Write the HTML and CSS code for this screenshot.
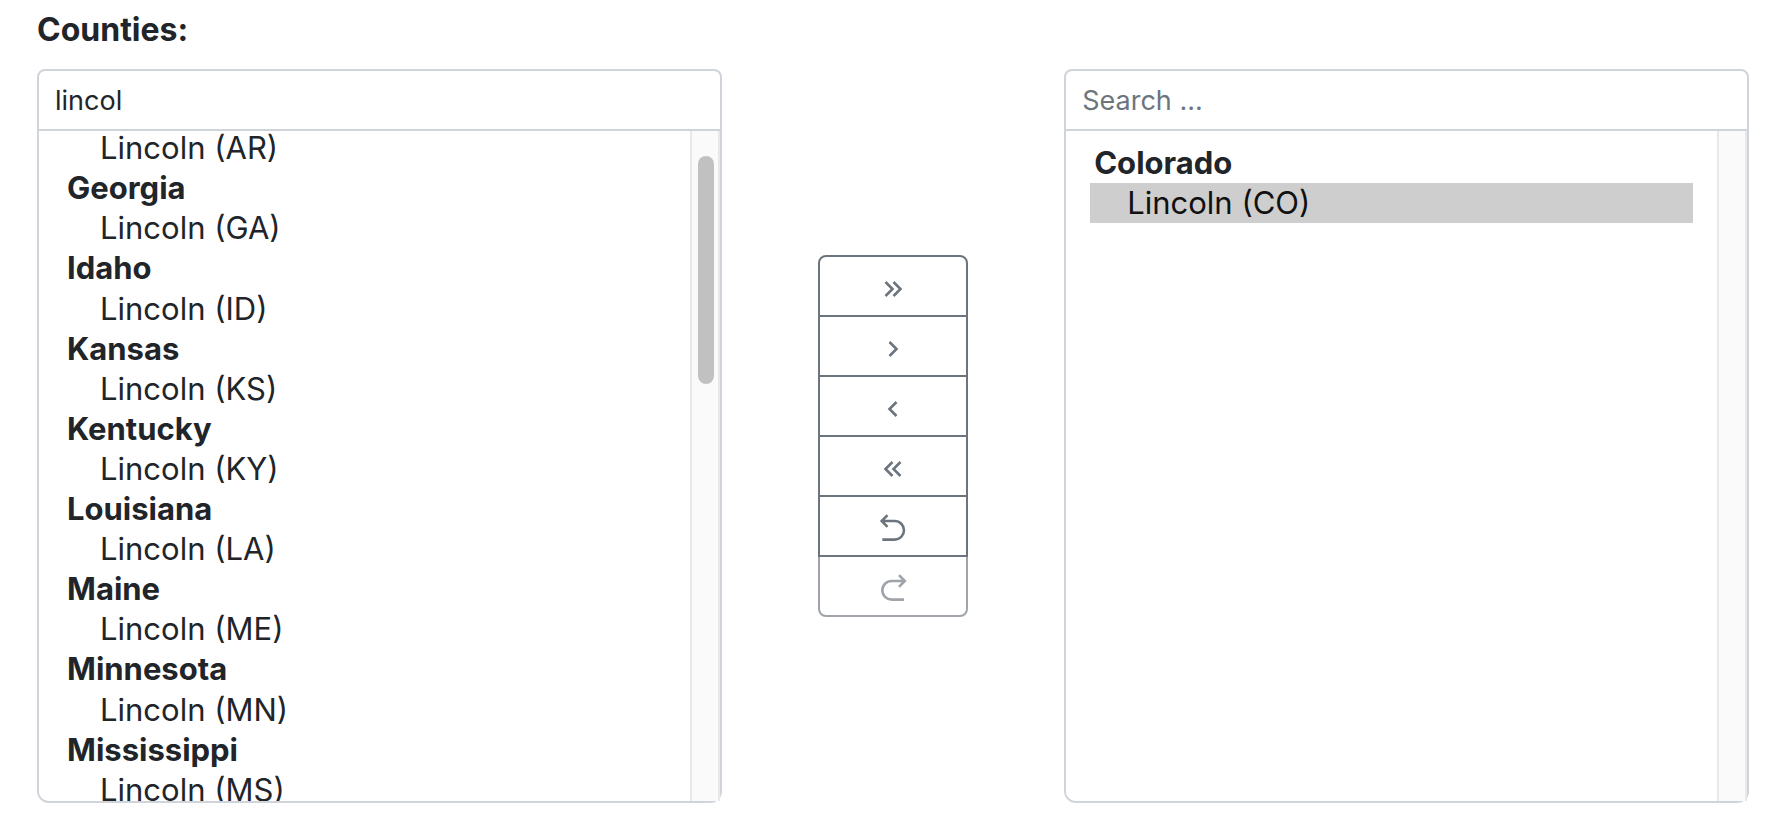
FILE: index.html
```html
<!DOCTYPE html>
<html lang="en">
<head>
<meta charset="utf-8">
<title>Counties</title>
<link rel="stylesheet" href="styles.css">
</head>
<body>
<main class="page">
  <label class="title" for="available">Counties:</label>
  <div class="transfer">
    <section class="panel">
      <input class="search" type="text" value="lincol" placeholder="Search ..." aria-label="Search available counties">
      <div class="list">
        <select class="options" id="available" multiple>
          <optgroup label="Arkansas"><option>Lincoln (AR)</option></optgroup>
          <optgroup label="Georgia"><option>Lincoln (GA)</option></optgroup>
          <optgroup label="Idaho"><option>Lincoln (ID)</option></optgroup>
          <optgroup label="Kansas"><option>Lincoln (KS)</option></optgroup>
          <optgroup label="Kentucky"><option>Lincoln (KY)</option></optgroup>
          <optgroup label="Louisiana"><option>Lincoln (LA)</option></optgroup>
          <optgroup label="Maine"><option>Lincoln (ME)</option></optgroup>
          <optgroup label="Minnesota"><option>Lincoln (MN)</option></optgroup>
          <optgroup label="Mississippi"><option>Lincoln (MS)</option></optgroup>
        </select>
        <div class="track"><div class="thumb"></div></div>
      </div>
    </section>
    <div class="actions">
      <button class="action" type="button" aria-label="Move all right"><svg class="icon" viewBox="0 0 32 32"><path d="M8.5 9l7 7-7 7M16.5 9l7 7-7 7"/></svg></button>
      <button class="action" type="button" aria-label="Move selected right"><svg class="icon" viewBox="0 0 32 32"><path d="M12.5 9l7 7-7 7"/></svg></button>
      <button class="action" type="button" aria-label="Move selected left"><svg class="icon" viewBox="0 0 32 32"><path d="M19.5 9l-7 7 7 7"/></svg></button>
      <button class="action" type="button" aria-label="Move all left"><svg class="icon" viewBox="0 0 32 32"><path d="M15.5 9l-7 7 7 7M23.5 9l-7 7 7 7"/></svg></button>
      <button class="action" type="button" aria-label="Undo"><svg class="icon" viewBox="0 0 32 32"><path d="M10.5 2.2L4.7 8l5.8 5.8M4.7 8H17.7a9.3 9.3 0 0 1 0 18.6H5.3"/></svg></button>
      <button class="action" type="button" aria-label="Redo" disabled><svg class="icon" viewBox="0 0 32 32"><path d="M22 2.2L27.8 8l-5.8 5.8M27.8 8H14.6a9.3 9.3 0 0 0 0 18.6H27"/></svg></button>
    </div>
    <section class="panel">
      <input class="search" type="text" placeholder="Search ..." aria-label="Search selected counties">
      <div class="list">
        <select class="options" multiple aria-label="Selected counties">
          <optgroup label="Colorado"><option selected>Lincoln (CO)</option></optgroup>
        </select>
        <div class="track"></div>
      </div>
    </section>
  </div>
</main>
<script src="app.js"></script>
</body>
</html>
```

FILE: styles.css
```css
* {
  box-sizing: border-box;
}

body {
  margin: 0;
  background: #fff;
  color: #212529;
  font-family: Inter, "Liberation Sans", sans-serif;
}

.page {
  display: flex;
  flex-direction: column;
  height: 100vh;
  min-height: 640px;
  padding: 5px 31px 25px 37px;
}

.title {
  margin-bottom: 14px;
  font-size: 32px;
  font-weight: 700;
  line-height: 50px;
}

.transfer {
  display: grid;
  flex: 1;
  grid-template-columns: 2fr 1fr 2fr;
  min-height: 0;
}

.panel {
  display: flex;
  flex-direction: column;
  min-width: 0;
  min-height: 0;
}

.search {
  width: 100%;
  height: 62px;
  padding: 0 16px;
  border: 2px solid #ced4da;
  border-radius: 8px 8px 0 0;
  outline: 0;
  background: #fff;
  color: #212529;
  font: 400 27px/42px Inter, "Liberation Sans", sans-serif;
}

.search::placeholder {
  color: #6c757d;
  opacity: 1;
}

.list {
  display: flex;
  flex: 1;
  min-height: 0;
  border: 2px solid #ced4da;
  border-top: 0;
  border-radius: 0 0 12px 12px;
}

.options {
  flex: 1;
  min-width: 0;
  height: 100%;
  padding: 12px 24px;
  border: 0;
  border-radius: 0 0 0 10px;
  outline: 0;
  background: #fff;
  color: #212529;
  font: 400 31px Inter, "Liberation Sans", sans-serif;
  scrollbar-width: none;
}

.options optgroup {
  padding: 1px 0 0 2px;
  font-weight: 700;
}

.options option {
  margin: 1px 0 0 -2px;
  padding: 1px 4px 1px 37px;
  min-height: 40px;
  font-weight: 400;
}

.track {
  width: 30px;
  padding: 25px 6px;
  border: solid #e8e8e8;
  border-width: 0 2px;
  background: #fafafa;
}

.thumb {
  width: 16px;
  height: 228px;
  border-radius: 8px;
  background: #c1c1c1;
}

.actions {
  display: flex;
  flex-direction: column;
  justify-content: center;
  padding: 0 96px;
}

.action {
  display: flex;
  align-items: center;
  justify-content: center;
  height: 62px;
  padding: 6px 0 0;
  border: 2px solid #6c757d;
  background: transparent;
  color: #6c757d;
}

.action + .action {
  margin-top: -2px;
}

.action:first-child {
  border-radius: 8px 8px 0 0;
}

.action:last-child {
  border-radius: 0 0 8px 8px;
}

.action:disabled {
  opacity: 0.65;
}

.icon {
  width: 32px;
  height: 32px;
  fill: none;
  stroke: currentColor;
  stroke-width: 2.6;
}
```

FILE: app.js
```js
document.getElementById("available").scrollTop = 55;
```
